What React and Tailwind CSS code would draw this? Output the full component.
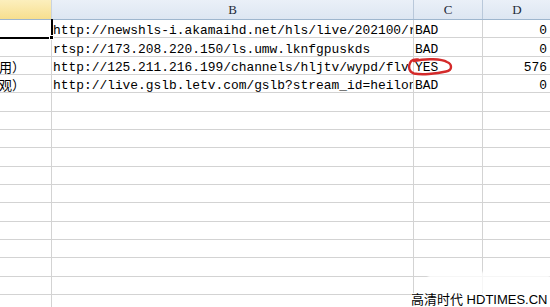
import React from "react";

const rows = [
  { a: "", b: "http://newshls-i.akamaihd.net/hls/live/202100/rtmp", c: "BAD", d: "0" },
  { a: "", b: "rtsp://173.208.220.150/ls.umw.lknfgpuskds", c: "BAD", d: "0" },
  { a: "用）", b: "http://125.211.216.199/channels/hljtv/wypd/flv", c: "YES", d: "576" },
  { a: "观）", b: "http://live.gslb.letv.com/gslb?stream_id=heilongjiang", c: "BAD", d: "0" },
];
const empty = Array.from({ length: 12 }, () => ({ a: "", b: "", c: "", d: "" }));
const all = [...rows, ...empty];

function Row({ r }) {
  return (
    <div className="flex h-[18.33px] shrink-0 border-b border-[#d3d3d3] text-[12.9px] text-black leading-[13px] font-['Liberation_Mono','Noto_Sans_CJK_SC',monospace]">
      <div className="w-[52px] shrink-0 border-r border-[#d3d3d3] flex items-end overflow-hidden whitespace-nowrap">
        <span className="ml-[-1px] font-['Noto_Sans_CJK_SC',sans-serif] text-[13px] leading-[13px] pb-[1px]">{r.a}</span>
      </div>
      <div className="w-[362px] shrink-0 border-r border-[#d3d3d3] flex items-end overflow-hidden whitespace-nowrap pl-[1px]">
        <span>{r.b}</span>
      </div>
      <div className="w-[69px] shrink-0 border-r border-[#d3d3d3] flex items-end overflow-hidden whitespace-nowrap pl-[1px]">
        <span>{r.c}</span>
      </div>
      <div className="w-[68px] shrink-0 flex items-end justify-end overflow-hidden whitespace-nowrap pr-[4px]">
        <span>{r.d}</span>
      </div>
    </div>
  );
}

export default function App() {
  return (
    <div className="relative w-[550px] h-[307px] overflow-hidden bg-white">
      <div className="flex flex-col">
        <div className="flex h-[20px] shrink-0 border-b border-[#9eb6ce] text-[13px] leading-[13px] text-[#1f2a38] font-['Liberation_Serif',serif]">
          <div className="w-[52px] shrink-0 border-r border-[#c9d3e0] bg-gradient-to-b from-[#fcefbd] to-[#f7df8e]" />
          <div className="w-[362px] shrink-0 border-r border-[#b9c8da] bg-gradient-to-b from-[#eaf0f8] to-[#dde6f2] flex items-center justify-center">B</div>
          <div className="w-[69px] shrink-0 border-r border-[#b9c8da] bg-gradient-to-b from-[#eaf0f8] to-[#dde6f2] flex items-center justify-center">C</div>
          <div className="w-[68px] shrink-0 bg-gradient-to-b from-[#eaf0f8] to-[#dde6f2] flex items-center justify-center">D</div>
        </div>
        {all.map((r, i) => (
          <Row key={i} r={r} />
        ))}
      </div>

      {/* active cell */}
      <div className="absolute left-0 top-[19px] w-[53px] h-[20px] border-r-2 border-b-2 border-black" />
      <div className="absolute left-[49px] top-[35px] w-[5px] h-[5px] bg-black border border-white" />

      {/* red circle around YES */}
      <svg className="absolute left-[406px] top-[56px]" width="48" height="22" viewBox="0 0 48 22">
        <path
          d="M8 5 C20 2, 36 3, 41 6 C46 8, 47 14, 40 15.5 C30 18, 15 19, 8 17.5 C3 16, 2 11, 4 7 C5 4, 9 3, 12 3.5"
          fill="none"
          stroke="#d42a2a"
          strokeWidth="2.4"
          strokeLinecap="round"
        />
      </svg>

      {/* watermark */}
      <div className="absolute left-[428px] top-[272px] w-[122px] h-[21px] bg-white/80 blur-[1px]" />
      <div className="absolute left-[411px] top-[293px] h-[14px] pr-[2px] bg-white text-[13px] leading-[14px] text-black whitespace-nowrap font-['Liberation_Sans','Noto_Sans_CJK_SC',sans-serif]">
        高清时代 HDTIMES.CN
      </div>
    </div>
  );
}
